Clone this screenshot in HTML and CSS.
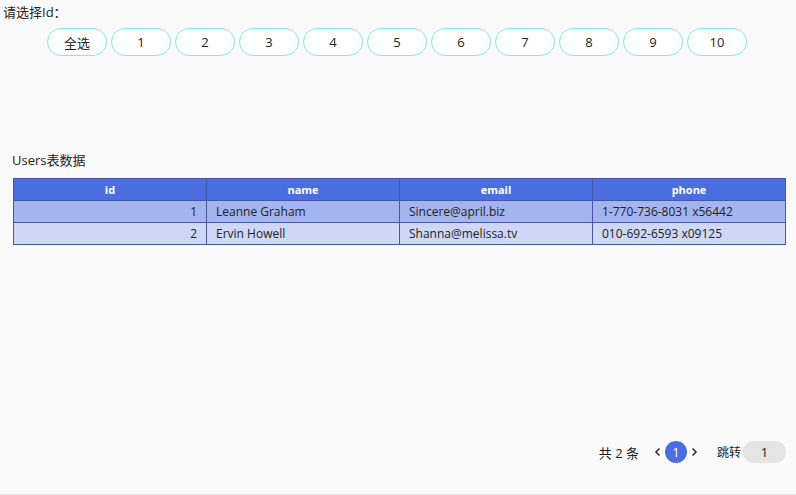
FILE: index.html
```html
<!DOCTYPE html>
<html>
<head>
  <meta charset="utf-8">
  <link rel="stylesheet" href="styles.css">
</head>
<body>
  <div class="page">
    <div class="picker">
      <div class="picker-label">请选择Id：</div>
      <div class="picker-options">
        <button class="id-btn">全选</button>
        <button class="id-btn">1</button>
        <button class="id-btn">2</button>
        <button class="id-btn">3</button>
        <button class="id-btn">4</button>
        <button class="id-btn">5</button>
        <button class="id-btn">6</button>
        <button class="id-btn">7</button>
        <button class="id-btn">8</button>
        <button class="id-btn">9</button>
        <button class="id-btn">10</button>
      </div>
    </div>

    <div class="users">
      <div class="users-title">Users表数据</div>
      <table class="users-table">
        <thead>
          <tr>
            <th>id</th>
            <th>name</th>
            <th>email</th>
            <th>phone</th>
          </tr>
        </thead>
        <tbody>
          <tr>
            <td class="num">1</td>
            <td>Leanne Graham</td>
            <td>Sincere@april.biz</td>
            <td>1-770-736-8031 x56442</td>
          </tr>
          <tr>
            <td class="num">2</td>
            <td>Ervin Howell</td>
            <td>Shanna@melissa.tv</td>
            <td>010-692-6593 x09125</td>
          </tr>
        </tbody>
      </table>
    </div>

    <div class="pager">
      <span class="pager-total">共 2 条</span>
      <span class="pager-arrow">
        <svg width="8" height="10" viewBox="0 0 8 10"><path d="M5.5 1.5 L2 5 L5.5 8.5" fill="none" stroke="#333" stroke-width="1.6"/></svg>
      </span>
      <span class="pager-page active">1</span>
      <span class="pager-arrow">
        <svg width="8" height="10" viewBox="0 0 8 10"><path d="M2.5 1.5 L6 5 L2.5 8.5" fill="none" stroke="#333" stroke-width="1.6"/></svg>
      </span>
      <span class="pager-jump">跳转</span>
      <span class="pager-input">1</span>
    </div>
  </div>
</body>
</html>
```

FILE: styles.css
```css
html, body {
  margin: 0;
  background: #fafafa;
}

body {
  font-family: "Open Sans", "Noto Sans CJK SC", sans-serif;
  color: #222;
}

.page {
  display: flex;
  flex-direction: column;
  height: 100vh;
  box-sizing: border-box;
  border-bottom: 1px solid #e6e6e6;
}

/* id picker */
.picker {
  padding: 3px 0 0 3px;
}

.picker-label {
  font-size: 13px;
  line-height: 18px;
}

.picker-options {
  display: flex;
  justify-content: center;
  gap: 4px;
  margin-top: 7px;
  padding-right: 5px;
}

.id-btn {
  width: 60px;
  height: 28px;
  padding: 0;
  border: 1px solid #7ee8f5;
  border-radius: 14px;
  background: #fff;
  font-family: inherit;
  font-size: 13px;
  color: #222;
}

/* users table */
.users {
  padding: 0 10px 0 13px;
  margin-top: 95px;
}

.users-title {
  font-size: 13px;
  line-height: 18px;
  margin-left: -1px;
  margin-bottom: 9px;
}

.users-table {
  width: 100%;
  border-collapse: collapse;
  table-layout: fixed;
  font-size: 12px;
}

.users-table th,
.users-table td {
  border: 1px solid #4756a8;
  height: 22px;
  padding: 0 9px;
  line-height: 16px;
  box-sizing: border-box;
}

.users-table th {
  background: #4a6ee0;
  color: #fff;
  font-size: 11px;
  font-weight: bold;
  text-align: center;
}

.users-table tbody tr:nth-child(odd) {
  background: #a3b4ee;
}

.users-table tbody tr:nth-child(even) {
  background: #cfd7f6;
}

.users-table td.num {
  text-align: right;
}

/* pagination */
.pager {
  margin-top: auto;
  margin-bottom: 31px;
  display: flex;
  justify-content: flex-end;
  align-items: center;
  padding-right: 10px;
  font-size: 12px;
}

.pager-total {
  font-size: 13px;
  margin-right: 14px;
}

.pager-arrow {
  display: flex;
  align-items: center;
  width: 10px;
  justify-content: center;
}

.pager-page {
  width: 22px;
  height: 22px;
  border-radius: 50%;
  display: flex;
  align-items: center;
  justify-content: center;
  font-size: 13px;
  margin: 0 2px;
}

.pager-page.active {
  background: #4a6ee0;
  color: #fff;
}

.pager-jump {
  margin-left: 18px;
  margin-right: 2px;
}

.pager-input {
  width: 43px;
  height: 22px;
  line-height: 22px;
  border-radius: 11px;
  background: #e4e4e4;
  text-align: center;
  font-size: 13px;
}
```
